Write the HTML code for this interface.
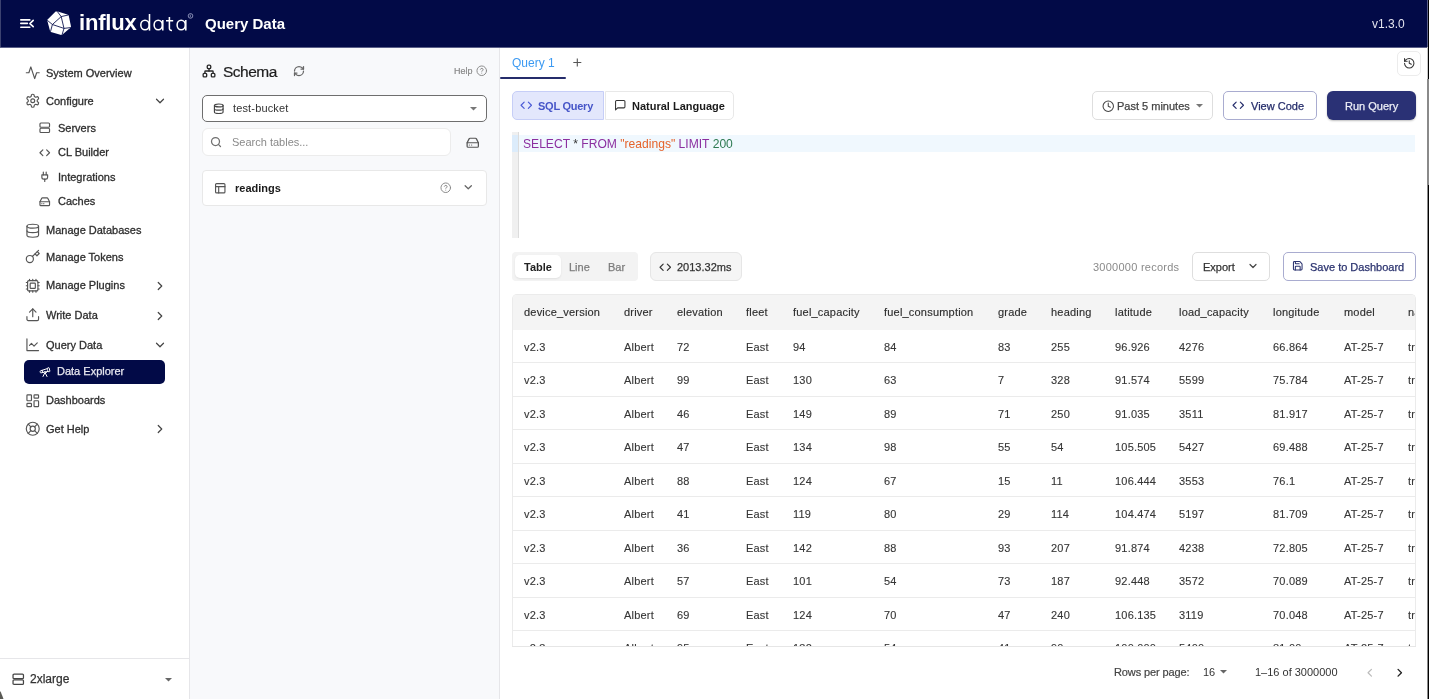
<!DOCTYPE html>
<html><head><meta charset="utf-8">
<style>
*{box-sizing:border-box;margin:0;padding:0}
html,body{width:1429px;height:699px;overflow:hidden;background:#fff;font-family:"Liberation Sans",sans-serif}
.t{position:absolute;line-height:1;white-space:nowrap;will-change:transform}
.b{position:absolute}
.i{position:absolute;overflow:visible}
</style></head><body>
<div class="b" style="left:0px;top:0px;width:1429px;height:47px;background:#020a47"></div><div class="b" style="left:0px;top:47px;width:1429px;height:1px;background:#5a5f88"></div><div class="b" style="left:0px;top:0px;width:1px;height:47px;background:#3c4270"></div><svg class="i" style="left:16px;top:14px" width="24" height="20" viewBox="0 0 24 20"><g stroke="#fff" stroke-width="1.6" fill="none" stroke-linecap="round" stroke-linejoin="round"><path d="M4.8 5.9H13.8M4.8 9.4H11.4M4.8 13.2H13.8"/><path d="M17.2 6.4L13.9 9.6L17.2 12.6"/></g></svg><svg class="i" style="left:44px;top:8px" width="32" height="30" viewBox="0 0 32 30"><path d="M3.6 11.4L11.6 3.4L13.7 3.6L23.4 6.4L24.7 7.5L27 18.5L25.8 20.2L18.5 26.4L17.2 27L6.9 24L6 22.7L3.4 12.9Z" fill="#fff"/><g stroke="#020a47" stroke-width="0.85" fill="none"><path d="M13.2 3.3L17.2 8.6L24.2 7M17.2 8.6L8.4 16.5L3.3 12.3M8.4 16.5L20 20.4L26.5 19.6M17.2 8.6L20 20.4L18 26.9M8.4 16.5L6.5 23.6"/></g></svg><div class="t" style="left:79.30px;top:12.18px;font-size:22px;color:#fff"><b style="letter-spacing:-0.2px">influx</b></div><svg class="i" style="left:136px;top:10px" width="60" height="24" viewBox="0 0 60 24"><g fill="none" stroke="#fff" stroke-width="1.55"><ellipse cx="9" cy="15" rx="4.2" ry="4.8"/><path d="M13.5 4V20.6"/><ellipse cx="22.2" cy="15" rx="4.1" ry="4.8"/><path d="M26.8 10V20.6"/><path d="M33.4 6.9V18.2Q33.4 20.6 36 20.4M30 10.7H37.2"/><ellipse cx="45.2" cy="15" rx="4.1" ry="4.8"/><path d="M49.8 10V20.6"/></g><circle cx="54.5" cy="5.9" r="2.3" fill="none" stroke="#aab0d0" stroke-width="0.8"/><path d="M54.3 4.6V7.2" stroke="#aab0d0" stroke-width="0.7"/></svg><div class="t" style="left:205.00px;top:16.20px;font-size:15px;color:#fff;font-weight:bold">Query Data</div><div class="t" style="left:1371.50px;top:17.84px;font-size:12px;color:#e4e4ee">v1.3.0</div><div class="b" style="left:189px;top:48px;width:1px;height:651px;background:#e6e6e9"></div><svg class="i" style="left:25.05px;top:64.85px" width="15.5" height="15.5" viewBox="0 0 24 24" fill="none" stroke="#555" stroke-width="1.8" stroke-linecap="round" stroke-linejoin="round"><path d="M22 12h-4l-3 9L9 3l-3 9H2"/></svg><div class="t" style="left:46.30px;top:67.69px;font-size:11px;color:#2e2e2e;-webkit-text-stroke:0.3px #2e2e2e">System Overview</div><svg class="i" style="left:24.95px;top:93.05px" width="15.5" height="15.5" viewBox="0 0 24 24" fill="none" stroke="#555" stroke-width="1.8" stroke-linecap="round" stroke-linejoin="round"><path d="M12.22 2h-.44a2 2 0 0 0-2 2v.18a2 2 0 0 1-1 1.730l-.43.25a2 2 0 0 1-2 0l-.15-.08a2 2 0 0 0-2.73.73l-.22.38a2 2 0 0 0 .73 2.73l.15.1a2 2 0 0 1 1 1.72v.51a2 2 0 0 1-1 1.74l-.15.09a2 2 0 0 0-.73 2.73l.22.38a2 2 0 0 0 2.73.73l.15-.08a2 2 0 0 1 2 0l.43.25a2 2 0 0 1 1 1.73V20a2 2 0 0 0 2 2h.44a2 2 0 0 0 2-2v-.18a2 2 0 0 1 1-1.73l.43-.25a2 2 0 0 1 2 0l.15.08a2 2 0 0 0 2.73-.73l.22-.39a2 2 0 0 0-.73-2.730l-.15-.08a2 2 0 0 1-1-1.74v-.5a2 2 0 0 1 1-1.74l.15-.09a2 2 0 0 0 .73-2.73l-.22-.38a2 2 0 0 0-2.73-.73l-.15.08a2 2 0 0 1-2 0l-.43-.25a2 2 0 0 1-1-1.73V4a2 2 0 0 0-2-2z"/><circle cx="12" cy="12" r="3"/></svg><div class="t" style="left:46.30px;top:95.99px;font-size:11px;color:#2e2e2e;-webkit-text-stroke:0.3px #2e2e2e">Configure</div><svg class="i" style="left:38.75px;top:122.25px" width="11.5" height="11.5" viewBox="0 0 24 24" fill="none" stroke="#555" stroke-width="2.4260869565217393" stroke-linecap="round" stroke-linejoin="round"><rect width="20" height="9" x="2" y="2" rx="2"/><rect width="20" height="9" x="2" y="13" rx="2"/></svg><div class="t" style="left:58.30px;top:122.89px;font-size:11px;color:#2e2e2e;-webkit-text-stroke:0.3px #2e2e2e">Servers</div><svg class="i" style="left:38.85px;top:147.35px" width="11.5" height="11.5" viewBox="0 0 24 24" fill="none" stroke="#555" stroke-width="2.4260869565217393" stroke-linecap="round" stroke-linejoin="round"><polyline points="16 18 22 12 16 6"/><polyline points="8 6 2 12 8 18"/></svg><div class="t" style="left:58.30px;top:147.49px;font-size:11px;color:#2e2e2e;-webkit-text-stroke:0.3px #2e2e2e">CL Builder</div><svg class="i" style="left:38.95px;top:171.45px" width="11.5" height="11.5" viewBox="0 0 24 24" fill="none" stroke="#555" stroke-width="2.4260869565217393" stroke-linecap="round" stroke-linejoin="round"><path d="M12 22v-5"/><path d="M9 8V2"/><path d="M15 8V2"/><path d="M18 8v5a4 4 0 0 1-4 4h-4a4 4 0 0 1-4-4V8Z"/></svg><div class="t" style="left:58.30px;top:171.79px;font-size:11px;color:#2e2e2e;-webkit-text-stroke:0.3px #2e2e2e">Integrations</div><svg class="i" style="left:38.75px;top:195.75px" width="11.5" height="11.5" viewBox="0 0 24 24" fill="none" stroke="#555" stroke-width="2.4260869565217393" stroke-linecap="round" stroke-linejoin="round"><line x1="22" x2="2" y1="12" y2="12"/><path d="M5.45 5.11 2 12v6a2 2 0 0 0 2 2h16a2 2 0 0 0 2-2v-6l-3.45-6.89A2 2 0 0 0 16.76 4H7.24a2 2 0 0 0-1.790 1.11z"/><line x1="6" x2="6.01" y1="16" y2="16"/><line x1="10" x2="10.01" y1="16" y2="16"/></svg><div class="t" style="left:58.30px;top:196.49px;font-size:11px;color:#2e2e2e;-webkit-text-stroke:0.3px #2e2e2e">Caches</div><svg class="i" style="left:24.75px;top:222.55px" width="15.5" height="15.5" viewBox="0 0 24 24" fill="none" stroke="#555" stroke-width="1.8" stroke-linecap="round" stroke-linejoin="round"><ellipse cx="12" cy="5" rx="9" ry="3"/><path d="M3 5V19A9 3 0 0 0 21 19V5"/><path d="M3 12A9 3 0 0 0 21 12"/></svg><div class="t" style="left:46.30px;top:225.09px;font-size:11px;color:#2e2e2e;-webkit-text-stroke:0.3px #2e2e2e">Manage Databases</div><svg class="i" style="left:25.05px;top:249.05px" width="15.5" height="15.5" viewBox="0 0 24 24" fill="none" stroke="#555" stroke-width="1.8" stroke-linecap="round" stroke-linejoin="round"><circle cx="7.5" cy="15.5" r="5.5"/><path d="m21 2-9.6 9.6"/><path d="m15.5 7.5 3 3L22 7l-3-3"/></svg><div class="t" style="left:46.30px;top:251.69px;font-size:11px;color:#2e2e2e;-webkit-text-stroke:0.3px #2e2e2e">Manage Tokens</div><svg class="i" style="left:25.05px;top:277.75px" width="15.5" height="15.5" viewBox="0 0 24 24" fill="none" stroke="#555" stroke-width="1.8" stroke-linecap="round" stroke-linejoin="round"><rect width="16" height="16" x="4" y="4" rx="2"/><rect width="8" height="8" x="8" y="8" rx="1"/><path d="M12 20v2M12 2v2M17 20v2M17 2v2M2 12h2M2 17h2M2 7h2M20 12h2M20 17h2M20 7h2M7 20v2M7 2v2"/></svg><div class="t" style="left:46.30px;top:280.19px;font-size:11px;color:#2e2e2e;-webkit-text-stroke:0.3px #2e2e2e">Manage Plugins</div><svg class="i" style="left:24.75px;top:307.25px" width="15.5" height="15.5" viewBox="0 0 24 24" fill="none" stroke="#555" stroke-width="1.8" stroke-linecap="round" stroke-linejoin="round"><path d="M21 15v4a2 2 0 0 1-2 2H5a2 2 0 0 1-2-2v-4"/><polyline points="17 8 12 3 7 8"/><line x1="12" x2="12" y1="3" y2="15"/></svg><div class="t" style="left:46.30px;top:309.89px;font-size:11px;color:#2e2e2e;-webkit-text-stroke:0.3px #2e2e2e">Write Data</div><svg class="i" style="left:24.75px;top:336.75px" width="15.5" height="15.5" viewBox="0 0 24 24" fill="none" stroke="#555" stroke-width="1.8" stroke-linecap="round" stroke-linejoin="round"><path d="M3 3v18h18"/><path d="m19 9-5 5-4-4-3 3"/></svg><div class="t" style="left:46.30px;top:339.59px;font-size:11px;color:#2e2e2e;-webkit-text-stroke:0.3px #2e2e2e">Query Data</div><svg class="i" style="left:25.05px;top:392.65px" width="15.5" height="15.5" viewBox="0 0 24 24" fill="none" stroke="#555" stroke-width="1.8" stroke-linecap="round" stroke-linejoin="round"><rect width="7" height="9" x="3" y="3" rx="1"/><rect width="7" height="5" x="14" y="3" rx="1"/><rect width="7" height="9" x="14" y="12" rx="1"/><rect width="7" height="5" x="3" y="16" rx="1"/></svg><div class="t" style="left:46.30px;top:395.19px;font-size:11px;color:#2e2e2e;-webkit-text-stroke:0.3px #2e2e2e">Dashboards</div><svg class="i" style="left:25.15px;top:420.55px" width="15.5" height="15.5" viewBox="0 0 24 24" fill="none" stroke="#555" stroke-width="1.8" stroke-linecap="round" stroke-linejoin="round"><circle cx="12" cy="12" r="10"/><path d="m4.93 4.93 4.24 4.24"/><path d="m14.83 9.17 4.24-4.24"/><path d="m14.83 14.83 4.24 4.24"/><path d="m9.17 14.83-4.24 4.24"/><circle cx="12" cy="12" r="4"/></svg><div class="t" style="left:46.30px;top:423.59px;font-size:11px;color:#2e2e2e;-webkit-text-stroke:0.3px #2e2e2e">Get Help</div><div class="b" style="left:24px;top:359.5px;width:141px;height:24.0px;background:#020a47;border-radius:5px"></div><svg class="i" style="left:38.90px;top:366.30px" width="12" height="12" viewBox="0 0 24 24" fill="none" stroke="#fff" stroke-width="2.0" stroke-linecap="round" stroke-linejoin="round"><path d="m10.065 12.493-6.18 1.318a.934.934 0 0 1-1.108-.702l-.537-2.15a1.07 1.07 0 0 1 .691-1.265l13.504-4.44"/><path d="m13.56 11.747 4.332-.924"/><path d="m16 21-3.105-6.21"/><path d="M16.485 5.94a2 2 0 0 1 1.455-2.425l1.09-.272a1 1 0 0 1 1.212.727l1.515 6.06a1 1 0 0 1-.727 1.213l-1.09.272a2 2 0 0 1-2.425-1.455z"/><path d="m6.158 8.633 1.114 4.456"/><path d="m8 21 3.105-6.21"/><circle cx="12" cy="13" r="2"/></svg><div class="t" style="left:57.40px;top:366.49px;font-size:11px;color:#e8e8f0;-webkit-text-stroke:0.25px #e8e8f0">Data Explorer</div><svg class="i" style="left:153.30px;top:94.30px" width="14" height="14" viewBox="0 0 24 24" fill="none" stroke="#444" stroke-width="2.1" stroke-linecap="round" stroke-linejoin="round"><path d="m6 9 6 6 6-6"/></svg><svg class="i" style="left:153.30px;top:279.00px" width="14" height="14" viewBox="0 0 24 24" fill="none" stroke="#444" stroke-width="2.1" stroke-linecap="round" stroke-linejoin="round"><path d="m9 18 6-6-6-6"/></svg><svg class="i" style="left:153.30px;top:309.20px" width="14" height="14" viewBox="0 0 24 24" fill="none" stroke="#444" stroke-width="2.1" stroke-linecap="round" stroke-linejoin="round"><path d="m9 18 6-6-6-6"/></svg><svg class="i" style="left:153.30px;top:338.10px" width="14" height="14" viewBox="0 0 24 24" fill="none" stroke="#444" stroke-width="2.1" stroke-linecap="round" stroke-linejoin="round"><path d="m6 9 6 6 6-6"/></svg><svg class="i" style="left:153.30px;top:422.00px" width="14" height="14" viewBox="0 0 24 24" fill="none" stroke="#444" stroke-width="2.1" stroke-linecap="round" stroke-linejoin="round"><path d="m9 18 6-6-6-6"/></svg><div class="b" style="left:0px;top:658px;width:189px;height:1px;background:#e6e6e9"></div><svg class="i" style="left:11.65px;top:673.05px" width="12.5" height="12.5" viewBox="0 0 24 24" fill="none" stroke="#444" stroke-width="2.4" stroke-linecap="round" stroke-linejoin="round"><rect width="20" height="9" x="2" y="2" rx="2"/><rect width="20" height="9" x="2" y="13" rx="2"/></svg><div class="t" style="left:29.80px;top:673.34px;font-size:12px;color:#333;-webkit-text-stroke:0.25px #333">2xlarge</div><svg class="i" style="left:0;top:690px" width="5" height="9" viewBox="0 0 5 9"><path d="M0 1L1 2.5L3.5 9H0Z" fill="#5a5a55"/></svg><svg class="i" style="left:164.70px;top:677.85px" width="7" height="3.5" viewBox="0 0 7 3.5"><path d="M0 0H7L3.5 3.5Z" fill="#666"/></svg><div class="b" style="left:190px;top:48px;width:309px;height:651px;background:#f8f9fb"></div><div class="b" style="left:499px;top:48px;width:1px;height:651px;background:#e6e6e9"></div><svg class="i" style="left:202.00px;top:64.10px" width="14" height="14" viewBox="0 0 24 24" fill="none" stroke="#2a2a2a" stroke-width="2.3" stroke-linecap="round" stroke-linejoin="round"><rect x="16" y="16" width="6" height="6" rx="1.5"/><rect x="2" y="16" width="6" height="6" rx="1.5"/><rect x="9" y="2" width="6" height="6" rx="2"/><path d="M5 16v-3a1 1 0 0 1 1-1h12a1 1 0 0 1 1 1v3"/><path d="M12 12V8"/></svg><div class="t" style="left:222.50px;top:63.88px;font-size:15.5px;color:#1c1c1c;letter-spacing:-0.5px;-webkit-text-stroke:0.2px #1c1c1c">Schema</div><svg class="i" style="left:293.00px;top:65.00px" width="12" height="12" viewBox="0 0 24 24" fill="none" stroke="#666" stroke-width="2.5" stroke-linecap="round" stroke-linejoin="round"><path d="M3 12a9 9 0 0 1 9-9 9.75 9.75 0 0 1 6.74 2.74L21 8"/><path d="M21 3v5h-5"/><path d="M21 12a9 9 0 0 1-9 9 9.75 9.75 0 0 1-6.74-2.74L3 16"/><path d="M8 16H3v5"/></svg><div class="t" style="left:453.50px;top:66.58px;font-size:9px;color:#888;-webkit-text-stroke:0.2px #888">Help</div><svg class="i" style="left:476.15px;top:65.25px" width="11.5" height="11.5" viewBox="0 0 24 24" fill="none" stroke="#888" stroke-width="2.0" stroke-linecap="round" stroke-linejoin="round"><circle cx="12" cy="12" r="10"/><path d="M9.09 9a3 3 0 0 1 5.83 1c0 2-3 3-3 3"/><path d="M12 17h.01"/></svg><div class="b" style="left:201.5px;top:95px;width:285.5px;height:26.5px;background:#fff;border:1.3px solid #6e6e6e;border-radius:5px"></div><svg class="i" style="left:212.65px;top:102.85px" width="11.5" height="11.5" viewBox="0 0 24 24" fill="none" stroke="#444" stroke-width="2.4" stroke-linecap="round" stroke-linejoin="round"><ellipse cx="12" cy="5" rx="9" ry="3"/><path d="M3 5V19A9 3 0 0 0 21 19V5"/><path d="M3 12A9 3 0 0 0 21 12"/></svg><div class="t" style="left:232.50px;top:102.89px;font-size:11px;color:#333;letter-spacing:0.15px">test-bucket</div><svg class="i" style="left:469.50px;top:106.55px" width="7" height="3.5" viewBox="0 0 7 3.5"><path d="M0 0H7L3.5 3.5Z" fill="#777"/></svg><div class="b" style="left:202px;top:127.5px;width:249px;height:28.0px;background:#fff;border:1px solid #ececec;border-radius:6px"></div><svg class="i" style="left:210.30px;top:135.80px" width="12" height="12" viewBox="0 0 24 24" fill="none" stroke="#707070" stroke-width="2.5" stroke-linecap="round" stroke-linejoin="round"><circle cx="11" cy="11" r="8"/><path d="m21 21-4.3-4.3"/></svg><div class="t" style="left:232.00px;top:137.29px;font-size:11px;color:#8a8a8a">Search tables...</div><svg class="i" style="left:465.65px;top:135.75px" width="13.5" height="13.5" viewBox="0 0 24 24" fill="none" stroke="#555" stroke-width="2.2" stroke-linecap="round" stroke-linejoin="round"><line x1="22" x2="2" y1="12" y2="12"/><path d="M5.45 5.11 2 12v6a2 2 0 0 0 2 2h16a2 2 0 0 0 2-2v-6l-3.45-6.89A2 2 0 0 0 16.76 4H7.24a2 2 0 0 0-1.790 1.11z"/><line x1="6" x2="6.01" y1="16" y2="16"/><line x1="10" x2="10.01" y1="16" y2="16"/></svg><div class="b" style="left:201.5px;top:169.5px;width:285.0px;height:36.5px;background:#fff;border:1px solid #e8e8e8;border-radius:4px"></div><svg class="i" style="left:213.85px;top:181.65px" width="12.5" height="12.5" viewBox="0 0 24 24" fill="none" stroke="#555" stroke-width="2.2" stroke-linecap="round" stroke-linejoin="round"><rect width="18" height="18" x="3" y="3" rx="2"/><path d="M3 9h18"/><path d="M9 21V9"/></svg><div class="t" style="left:235.30px;top:182.99px;font-size:11px;color:#1a1a1a;font-weight:bold">readings</div><svg class="i" style="left:440.05px;top:182.35px" width="11.5" height="11.5" viewBox="0 0 24 24" fill="none" stroke="#888" stroke-width="2.0" stroke-linecap="round" stroke-linejoin="round"><circle cx="12" cy="12" r="10"/><path d="M9.09 9a3 3 0 0 1 5.83 1c0 2-3 3-3 3"/><path d="M12 17h.01"/></svg><svg class="i" style="left:462.25px;top:181.45px" width="12.5" height="12.5" viewBox="0 0 24 24" fill="none" stroke="#666" stroke-width="2.4" stroke-linecap="round" stroke-linejoin="round"><path d="m6 9 6 6 6-6"/></svg><div class="t" style="left:511.50px;top:57.44px;font-size:12px;color:#3c9af2">Query 1</div><div class="b" style="left:500px;top:77px;width:65.5px;height:2px;background:#252c6b;border-radius:1px"></div><svg class="i" style="left:572px;top:57px" width="11" height="11" viewBox="0 0 11 11"><path d="M5.3 1.5V9.5M1.3 5.5H9.3" stroke="#555" stroke-width="1.1"/></svg><div class="b" style="left:1396.5px;top:50.5px;width:24.0px;height:25.0px;background:#fff;border:1px solid #ececec;border-radius:5px"></div><svg class="i" style="left:1402.65px;top:56.75px" width="12.5" height="12.5" viewBox="0 0 24 24" fill="none" stroke="#333" stroke-width="2" stroke-linecap="round" stroke-linejoin="round"><path d="M3 12a9 9 0 1 0 9-9 9.75 9.75 0 0 0-6.74 2.74L3 8"/><path d="M3 3v5h5"/><path d="M12 7v5l4 2"/></svg><div class="b" style="left:511.5px;top:90.5px;width:92.0px;height:29.5px;background:#e3e7fc;border:1px solid #c6cef7;border-radius:5px 0 0 5px"></div><svg class="i" style="left:520.25px;top:99.35px" width="12.5" height="12.5" viewBox="0 0 24 24" fill="none" stroke="#4a5ad6" stroke-width="2.2" stroke-linecap="round" stroke-linejoin="round"><polyline points="16 18 22 12 16 6"/><polyline points="8 6 2 12 8 18"/></svg><div class="t" style="left:538.00px;top:100.59px;font-size:11px;color:#4655c8;font-weight:bold;letter-spacing:-0.25px">SQL Query</div><div class="b" style="left:605px;top:90.5px;width:128.5px;height:29.5px;background:#fff;border:1px solid #e8e8e8;border-radius:0 5px 5px 0"></div><svg class="i" style="left:614.25px;top:99.15px" width="12.5" height="12.5" viewBox="0 0 24 24" fill="none" stroke="#333" stroke-width="2" stroke-linecap="round" stroke-linejoin="round"><path d="M21 15a2 2 0 0 1-2 2H7l-4 4V5a2 2 0 0 1 2-2h14a2 2 0 0 1 2 2z"/></svg><div class="t" style="left:632.00px;top:100.59px;font-size:11px;color:#1a1a1a;font-weight:bold">Natural Language</div><div class="b" style="left:1091.5px;top:90.5px;width:121.5px;height:29.5px;background:#fff;border:1px solid #dedede;border-radius:5px"></div><svg class="i" style="left:1101.85px;top:99.85px" width="12.5" height="12.5" viewBox="0 0 24 24" fill="none" stroke="#444" stroke-width="2" stroke-linecap="round" stroke-linejoin="round"><circle cx="12" cy="12" r="10"/><polyline points="12 6 12 12 16 14"/></svg><div class="t" style="left:1117.20px;top:100.59px;font-size:11px;color:#444;-webkit-text-stroke:0.25px currentColor">Past 5 minutes</div><svg class="i" style="left:1195.70px;top:103.55px" width="7" height="3.5" viewBox="0 0 7 3.5"><path d="M0 0H7L3.5 3.5Z" fill="#777"/></svg><div class="b" style="left:1222.5px;top:90.5px;width:94.5px;height:29.5px;background:#fff;border:1px solid #a9acd0;border-radius:5px"></div><svg class="i" style="left:1231.95px;top:98.95px" width="12.5" height="12.5" viewBox="0 0 24 24" fill="none" stroke="#252d6b" stroke-width="2.2" stroke-linecap="round" stroke-linejoin="round"><polyline points="16 18 22 12 16 6"/><polyline points="8 6 2 12 8 18"/></svg><div class="t" style="left:1250.80px;top:100.59px;font-size:11px;color:#252d6b;-webkit-text-stroke:0.25px currentColor">View Code</div><div class="b" style="left:1326.5px;top:90.5px;width:89.0px;height:29.5px;background:#2a3175;border-radius:6px;box-shadow:0 1px 2px rgba(0,0,0,.25)"></div><div class="t" style="left:1344.50px;top:101.19px;font-size:11px;color:#eceef6;-webkit-text-stroke:0.25px currentColor">Run Query</div><div class="b" style="left:512px;top:132px;width:7px;height:106px;background:#f0f0f0;border-right:1px solid #dcdcdc"></div><div class="b" style="left:512px;top:135px;width:6px;height:16.5px;background:#dcecfb"></div><div class="b" style="left:519px;top:135px;width:896px;height:16.5px;background:#f0f8fe"></div><div class="t" style="left:523.00px;top:137.76px;font-size:12.1px;color:#8b2fa0">SELECT <span style="color:#333">*</span> FROM <span style="color:#e5632b">"readings"</span> LIMIT <span style="color:#2d7a52">200</span></div><div class="b" style="left:511.5px;top:251.5px;width:126.0px;height:29.5px;background:#f3f3f3;border-radius:4px"></div><div class="b" style="left:514.5px;top:254.5px;width:46.0px;height:23.5px;background:#fff;border-radius:5px;box-shadow:0 1px 2px rgba(0,0,0,.08)"></div><div class="t" style="left:524.30px;top:261.79px;font-size:11px;color:#222;font-weight:bold">Table</div><div class="t" style="left:568.80px;top:261.79px;font-size:11px;color:#7c7c7c;-webkit-text-stroke:0.25px currentColor">Line</div><div class="t" style="left:607.80px;top:261.79px;font-size:11px;color:#7c7c7c;-webkit-text-stroke:0.25px currentColor">Bar</div><div class="b" style="left:649.5px;top:251.5px;width:92.0px;height:29.5px;background:#f5f5f5;border:1px solid #e6e6e6;border-radius:6px"></div><svg class="i" style="left:658.75px;top:260.75px" width="12.5" height="12.5" viewBox="0 0 24 24" fill="none" stroke="#333" stroke-width="2.2" stroke-linecap="round" stroke-linejoin="round"><polyline points="16 18 22 12 16 6"/><polyline points="8 6 2 12 8 18"/></svg><div class="t" style="left:677.20px;top:261.79px;font-size:11px;color:#333;-webkit-text-stroke:0.25px currentColor">2013.32ms</div><div class="t" style="left:1092.80px;top:261.89px;font-size:11px;color:#8a8a8a;letter-spacing:0.25px">3000000 records</div><div class="b" style="left:1191.5px;top:251.5px;width:78.5px;height:29.5px;background:#fff;border:1px solid #dedede;border-radius:5px"></div><div class="t" style="left:1202.70px;top:261.89px;font-size:11px;color:#333;-webkit-text-stroke:0.25px currentColor">Export</div><svg class="i" style="left:1246.80px;top:260.40px" width="12" height="12" viewBox="0 0 24 24" fill="none" stroke="#444" stroke-width="2.4" stroke-linecap="round" stroke-linejoin="round"><path d="m6 9 6 6 6-6"/></svg><div class="b" style="left:1282.5px;top:251.5px;width:133.0px;height:29.5px;background:#fff;border:1px solid #a9acd0;border-radius:5px"></div><svg class="i" style="left:1292.25px;top:260.45px" width="11.5" height="11.5" viewBox="0 0 24 24" fill="none" stroke="#2b336f" stroke-width="2.2" stroke-linecap="round" stroke-linejoin="round"><path d="M15.2 3a2 2 0 0 1 1.4.6l3.8 3.8a2 2 0 0 1 .6 1.4V19a2 2 0 0 1-2 2H5a2 2 0 0 1-2-2V5a2 2 0 0 1 2-2z"/><path d="M17 21v-7a1 1 0 0 0-1-1H8a1 1 0 0 0-1 1v7"/><path d="M7 3v4a1 1 0 0 0 1 1h7"/></svg><div class="t" style="left:1310.10px;top:261.89px;font-size:11px;color:#2b336f;-webkit-text-stroke:0.25px currentColor">Save to Dashboard</div><div class="b" style="left:512px;top:293.5px;width:903.5px;height:353px;border:1px solid #ebebeb;border-bottom:none;border-radius:5px 5px 0 0;overflow:hidden;background:#fff"><div style="position:relative;left:-1px;top:-1px"><div class="b" style="left:0px;top:0px;width:904px;height:36px;background:#f4f4f4"></div><div class="t" style="left:12.20px;top:13.49px;font-size:11px;color:#2e2e2e;letter-spacing:0.2px;-webkit-text-stroke:0.15px #2e2e2e">device_version</div><div class="t" style="left:111.70px;top:13.49px;font-size:11px;color:#2e2e2e;letter-spacing:0.2px;-webkit-text-stroke:0.15px #2e2e2e">driver</div><div class="t" style="left:165.20px;top:13.49px;font-size:11px;color:#2e2e2e;letter-spacing:0.2px;-webkit-text-stroke:0.15px #2e2e2e">elevation</div><div class="t" style="left:234.20px;top:13.49px;font-size:11px;color:#2e2e2e;letter-spacing:0.2px;-webkit-text-stroke:0.15px #2e2e2e">fleet</div><div class="t" style="left:281.20px;top:13.49px;font-size:11px;color:#2e2e2e;letter-spacing:0.2px;-webkit-text-stroke:0.15px #2e2e2e">fuel_capacity</div><div class="t" style="left:372.20px;top:13.49px;font-size:11px;color:#2e2e2e;letter-spacing:0.2px;-webkit-text-stroke:0.15px #2e2e2e">fuel_consumption</div><div class="t" style="left:485.70px;top:13.49px;font-size:11px;color:#2e2e2e;letter-spacing:0.2px;-webkit-text-stroke:0.15px #2e2e2e">grade</div><div class="t" style="left:538.70px;top:13.49px;font-size:11px;color:#2e2e2e;letter-spacing:0.2px;-webkit-text-stroke:0.15px #2e2e2e">heading</div><div class="t" style="left:602.70px;top:13.49px;font-size:11px;color:#2e2e2e;letter-spacing:0.2px;-webkit-text-stroke:0.15px #2e2e2e">latitude</div><div class="t" style="left:667.20px;top:13.49px;font-size:11px;color:#2e2e2e;letter-spacing:0.2px;-webkit-text-stroke:0.15px #2e2e2e">load_capacity</div><div class="t" style="left:761.20px;top:13.49px;font-size:11px;color:#2e2e2e;letter-spacing:0.2px;-webkit-text-stroke:0.15px #2e2e2e">longitude</div><div class="t" style="left:831.70px;top:13.49px;font-size:11px;color:#2e2e2e;letter-spacing:0.2px;-webkit-text-stroke:0.15px #2e2e2e">model</div><div class="t" style="left:896.20px;top:13.49px;font-size:11px;color:#2e2e2e;letter-spacing:0.2px;-webkit-text-stroke:0.15px #2e2e2e">name</div><div class="b" style="left:0px;top:68.8px;width:904px;height:1.0px;background:#ebebeb"></div><div class="t" style="left:12.20px;top:48.09px;font-size:11px;color:#363636;letter-spacing:0.2px;-webkit-text-stroke:0.12px #363636">v2.3</div><div class="t" style="left:111.70px;top:48.09px;font-size:11px;color:#363636;letter-spacing:0.2px;-webkit-text-stroke:0.12px #363636">Albert</div><div class="t" style="left:165.20px;top:48.09px;font-size:11px;color:#363636;letter-spacing:0.2px;-webkit-text-stroke:0.12px #363636">72</div><div class="t" style="left:234.20px;top:48.09px;font-size:11px;color:#363636;letter-spacing:0.2px;-webkit-text-stroke:0.12px #363636">East</div><div class="t" style="left:281.20px;top:48.09px;font-size:11px;color:#363636;letter-spacing:0.2px;-webkit-text-stroke:0.12px #363636">94</div><div class="t" style="left:372.20px;top:48.09px;font-size:11px;color:#363636;letter-spacing:0.2px;-webkit-text-stroke:0.12px #363636">84</div><div class="t" style="left:485.70px;top:48.09px;font-size:11px;color:#363636;letter-spacing:0.2px;-webkit-text-stroke:0.12px #363636">83</div><div class="t" style="left:538.70px;top:48.09px;font-size:11px;color:#363636;letter-spacing:0.2px;-webkit-text-stroke:0.12px #363636">255</div><div class="t" style="left:602.70px;top:48.09px;font-size:11px;color:#363636;letter-spacing:0.2px;-webkit-text-stroke:0.12px #363636">96.926</div><div class="t" style="left:667.20px;top:48.09px;font-size:11px;color:#363636;letter-spacing:0.2px;-webkit-text-stroke:0.12px #363636">4276</div><div class="t" style="left:761.20px;top:48.09px;font-size:11px;color:#363636;letter-spacing:0.2px;-webkit-text-stroke:0.12px #363636">66.864</div><div class="t" style="left:831.70px;top:48.09px;font-size:11px;color:#363636;letter-spacing:0.2px;-webkit-text-stroke:0.12px #363636">AT-25-7</div><div class="t" style="left:896.20px;top:48.09px;font-size:11px;color:#363636;letter-spacing:0.2px;-webkit-text-stroke:0.12px #363636">tr</div><div class="b" style="left:0px;top:102.3px;width:904px;height:1.0px;background:#ebebeb"></div><div class="t" style="left:12.20px;top:81.59px;font-size:11px;color:#363636;letter-spacing:0.2px;-webkit-text-stroke:0.12px #363636">v2.3</div><div class="t" style="left:111.70px;top:81.59px;font-size:11px;color:#363636;letter-spacing:0.2px;-webkit-text-stroke:0.12px #363636">Albert</div><div class="t" style="left:165.20px;top:81.59px;font-size:11px;color:#363636;letter-spacing:0.2px;-webkit-text-stroke:0.12px #363636">99</div><div class="t" style="left:234.20px;top:81.59px;font-size:11px;color:#363636;letter-spacing:0.2px;-webkit-text-stroke:0.12px #363636">East</div><div class="t" style="left:281.20px;top:81.59px;font-size:11px;color:#363636;letter-spacing:0.2px;-webkit-text-stroke:0.12px #363636">130</div><div class="t" style="left:372.20px;top:81.59px;font-size:11px;color:#363636;letter-spacing:0.2px;-webkit-text-stroke:0.12px #363636">63</div><div class="t" style="left:485.70px;top:81.59px;font-size:11px;color:#363636;letter-spacing:0.2px;-webkit-text-stroke:0.12px #363636">7</div><div class="t" style="left:538.70px;top:81.59px;font-size:11px;color:#363636;letter-spacing:0.2px;-webkit-text-stroke:0.12px #363636">328</div><div class="t" style="left:602.70px;top:81.59px;font-size:11px;color:#363636;letter-spacing:0.2px;-webkit-text-stroke:0.12px #363636">91.574</div><div class="t" style="left:667.20px;top:81.59px;font-size:11px;color:#363636;letter-spacing:0.2px;-webkit-text-stroke:0.12px #363636">5599</div><div class="t" style="left:761.20px;top:81.59px;font-size:11px;color:#363636;letter-spacing:0.2px;-webkit-text-stroke:0.12px #363636">75.784</div><div class="t" style="left:831.70px;top:81.59px;font-size:11px;color:#363636;letter-spacing:0.2px;-webkit-text-stroke:0.12px #363636">AT-25-7</div><div class="t" style="left:896.20px;top:81.59px;font-size:11px;color:#363636;letter-spacing:0.2px;-webkit-text-stroke:0.12px #363636">tr</div><div class="b" style="left:0px;top:135.8px;width:904px;height:1.0px;background:#ebebeb"></div><div class="t" style="left:12.20px;top:115.09px;font-size:11px;color:#363636;letter-spacing:0.2px;-webkit-text-stroke:0.12px #363636">v2.3</div><div class="t" style="left:111.70px;top:115.09px;font-size:11px;color:#363636;letter-spacing:0.2px;-webkit-text-stroke:0.12px #363636">Albert</div><div class="t" style="left:165.20px;top:115.09px;font-size:11px;color:#363636;letter-spacing:0.2px;-webkit-text-stroke:0.12px #363636">46</div><div class="t" style="left:234.20px;top:115.09px;font-size:11px;color:#363636;letter-spacing:0.2px;-webkit-text-stroke:0.12px #363636">East</div><div class="t" style="left:281.20px;top:115.09px;font-size:11px;color:#363636;letter-spacing:0.2px;-webkit-text-stroke:0.12px #363636">149</div><div class="t" style="left:372.20px;top:115.09px;font-size:11px;color:#363636;letter-spacing:0.2px;-webkit-text-stroke:0.12px #363636">89</div><div class="t" style="left:485.70px;top:115.09px;font-size:11px;color:#363636;letter-spacing:0.2px;-webkit-text-stroke:0.12px #363636">71</div><div class="t" style="left:538.70px;top:115.09px;font-size:11px;color:#363636;letter-spacing:0.2px;-webkit-text-stroke:0.12px #363636">250</div><div class="t" style="left:602.70px;top:115.09px;font-size:11px;color:#363636;letter-spacing:0.2px;-webkit-text-stroke:0.12px #363636">91.035</div><div class="t" style="left:667.20px;top:115.09px;font-size:11px;color:#363636;letter-spacing:0.2px;-webkit-text-stroke:0.12px #363636">3511</div><div class="t" style="left:761.20px;top:115.09px;font-size:11px;color:#363636;letter-spacing:0.2px;-webkit-text-stroke:0.12px #363636">81.917</div><div class="t" style="left:831.70px;top:115.09px;font-size:11px;color:#363636;letter-spacing:0.2px;-webkit-text-stroke:0.12px #363636">AT-25-7</div><div class="t" style="left:896.20px;top:115.09px;font-size:11px;color:#363636;letter-spacing:0.2px;-webkit-text-stroke:0.12px #363636">tr</div><div class="b" style="left:0px;top:169.3px;width:904px;height:1.0px;background:#ebebeb"></div><div class="t" style="left:12.20px;top:148.59px;font-size:11px;color:#363636;letter-spacing:0.2px;-webkit-text-stroke:0.12px #363636">v2.3</div><div class="t" style="left:111.70px;top:148.59px;font-size:11px;color:#363636;letter-spacing:0.2px;-webkit-text-stroke:0.12px #363636">Albert</div><div class="t" style="left:165.20px;top:148.59px;font-size:11px;color:#363636;letter-spacing:0.2px;-webkit-text-stroke:0.12px #363636">47</div><div class="t" style="left:234.20px;top:148.59px;font-size:11px;color:#363636;letter-spacing:0.2px;-webkit-text-stroke:0.12px #363636">East</div><div class="t" style="left:281.20px;top:148.59px;font-size:11px;color:#363636;letter-spacing:0.2px;-webkit-text-stroke:0.12px #363636">134</div><div class="t" style="left:372.20px;top:148.59px;font-size:11px;color:#363636;letter-spacing:0.2px;-webkit-text-stroke:0.12px #363636">98</div><div class="t" style="left:485.70px;top:148.59px;font-size:11px;color:#363636;letter-spacing:0.2px;-webkit-text-stroke:0.12px #363636">55</div><div class="t" style="left:538.70px;top:148.59px;font-size:11px;color:#363636;letter-spacing:0.2px;-webkit-text-stroke:0.12px #363636">54</div><div class="t" style="left:602.70px;top:148.59px;font-size:11px;color:#363636;letter-spacing:0.2px;-webkit-text-stroke:0.12px #363636">105.505</div><div class="t" style="left:667.20px;top:148.59px;font-size:11px;color:#363636;letter-spacing:0.2px;-webkit-text-stroke:0.12px #363636">5427</div><div class="t" style="left:761.20px;top:148.59px;font-size:11px;color:#363636;letter-spacing:0.2px;-webkit-text-stroke:0.12px #363636">69.488</div><div class="t" style="left:831.70px;top:148.59px;font-size:11px;color:#363636;letter-spacing:0.2px;-webkit-text-stroke:0.12px #363636">AT-25-7</div><div class="t" style="left:896.20px;top:148.59px;font-size:11px;color:#363636;letter-spacing:0.2px;-webkit-text-stroke:0.12px #363636">tr</div><div class="b" style="left:0px;top:202.8px;width:904px;height:1.0px;background:#ebebeb"></div><div class="t" style="left:12.20px;top:182.09px;font-size:11px;color:#363636;letter-spacing:0.2px;-webkit-text-stroke:0.12px #363636">v2.3</div><div class="t" style="left:111.70px;top:182.09px;font-size:11px;color:#363636;letter-spacing:0.2px;-webkit-text-stroke:0.12px #363636">Albert</div><div class="t" style="left:165.20px;top:182.09px;font-size:11px;color:#363636;letter-spacing:0.2px;-webkit-text-stroke:0.12px #363636">88</div><div class="t" style="left:234.20px;top:182.09px;font-size:11px;color:#363636;letter-spacing:0.2px;-webkit-text-stroke:0.12px #363636">East</div><div class="t" style="left:281.20px;top:182.09px;font-size:11px;color:#363636;letter-spacing:0.2px;-webkit-text-stroke:0.12px #363636">124</div><div class="t" style="left:372.20px;top:182.09px;font-size:11px;color:#363636;letter-spacing:0.2px;-webkit-text-stroke:0.12px #363636">67</div><div class="t" style="left:485.70px;top:182.09px;font-size:11px;color:#363636;letter-spacing:0.2px;-webkit-text-stroke:0.12px #363636">15</div><div class="t" style="left:538.70px;top:182.09px;font-size:11px;color:#363636;letter-spacing:0.2px;-webkit-text-stroke:0.12px #363636">11</div><div class="t" style="left:602.70px;top:182.09px;font-size:11px;color:#363636;letter-spacing:0.2px;-webkit-text-stroke:0.12px #363636">106.444</div><div class="t" style="left:667.20px;top:182.09px;font-size:11px;color:#363636;letter-spacing:0.2px;-webkit-text-stroke:0.12px #363636">3553</div><div class="t" style="left:761.20px;top:182.09px;font-size:11px;color:#363636;letter-spacing:0.2px;-webkit-text-stroke:0.12px #363636">76.1</div><div class="t" style="left:831.70px;top:182.09px;font-size:11px;color:#363636;letter-spacing:0.2px;-webkit-text-stroke:0.12px #363636">AT-25-7</div><div class="t" style="left:896.20px;top:182.09px;font-size:11px;color:#363636;letter-spacing:0.2px;-webkit-text-stroke:0.12px #363636">tr</div><div class="b" style="left:0px;top:236.3px;width:904px;height:1.0px;background:#ebebeb"></div><div class="t" style="left:12.20px;top:215.59px;font-size:11px;color:#363636;letter-spacing:0.2px;-webkit-text-stroke:0.12px #363636">v2.3</div><div class="t" style="left:111.70px;top:215.59px;font-size:11px;color:#363636;letter-spacing:0.2px;-webkit-text-stroke:0.12px #363636">Albert</div><div class="t" style="left:165.20px;top:215.59px;font-size:11px;color:#363636;letter-spacing:0.2px;-webkit-text-stroke:0.12px #363636">41</div><div class="t" style="left:234.20px;top:215.59px;font-size:11px;color:#363636;letter-spacing:0.2px;-webkit-text-stroke:0.12px #363636">East</div><div class="t" style="left:281.20px;top:215.59px;font-size:11px;color:#363636;letter-spacing:0.2px;-webkit-text-stroke:0.12px #363636">119</div><div class="t" style="left:372.20px;top:215.59px;font-size:11px;color:#363636;letter-spacing:0.2px;-webkit-text-stroke:0.12px #363636">80</div><div class="t" style="left:485.70px;top:215.59px;font-size:11px;color:#363636;letter-spacing:0.2px;-webkit-text-stroke:0.12px #363636">29</div><div class="t" style="left:538.70px;top:215.59px;font-size:11px;color:#363636;letter-spacing:0.2px;-webkit-text-stroke:0.12px #363636">114</div><div class="t" style="left:602.70px;top:215.59px;font-size:11px;color:#363636;letter-spacing:0.2px;-webkit-text-stroke:0.12px #363636">104.474</div><div class="t" style="left:667.20px;top:215.59px;font-size:11px;color:#363636;letter-spacing:0.2px;-webkit-text-stroke:0.12px #363636">5197</div><div class="t" style="left:761.20px;top:215.59px;font-size:11px;color:#363636;letter-spacing:0.2px;-webkit-text-stroke:0.12px #363636">81.709</div><div class="t" style="left:831.70px;top:215.59px;font-size:11px;color:#363636;letter-spacing:0.2px;-webkit-text-stroke:0.12px #363636">AT-25-7</div><div class="t" style="left:896.20px;top:215.59px;font-size:11px;color:#363636;letter-spacing:0.2px;-webkit-text-stroke:0.12px #363636">tr</div><div class="b" style="left:0px;top:269.8px;width:904px;height:1.0px;background:#ebebeb"></div><div class="t" style="left:12.20px;top:249.09px;font-size:11px;color:#363636;letter-spacing:0.2px;-webkit-text-stroke:0.12px #363636">v2.3</div><div class="t" style="left:111.70px;top:249.09px;font-size:11px;color:#363636;letter-spacing:0.2px;-webkit-text-stroke:0.12px #363636">Albert</div><div class="t" style="left:165.20px;top:249.09px;font-size:11px;color:#363636;letter-spacing:0.2px;-webkit-text-stroke:0.12px #363636">36</div><div class="t" style="left:234.20px;top:249.09px;font-size:11px;color:#363636;letter-spacing:0.2px;-webkit-text-stroke:0.12px #363636">East</div><div class="t" style="left:281.20px;top:249.09px;font-size:11px;color:#363636;letter-spacing:0.2px;-webkit-text-stroke:0.12px #363636">142</div><div class="t" style="left:372.20px;top:249.09px;font-size:11px;color:#363636;letter-spacing:0.2px;-webkit-text-stroke:0.12px #363636">88</div><div class="t" style="left:485.70px;top:249.09px;font-size:11px;color:#363636;letter-spacing:0.2px;-webkit-text-stroke:0.12px #363636">93</div><div class="t" style="left:538.70px;top:249.09px;font-size:11px;color:#363636;letter-spacing:0.2px;-webkit-text-stroke:0.12px #363636">207</div><div class="t" style="left:602.70px;top:249.09px;font-size:11px;color:#363636;letter-spacing:0.2px;-webkit-text-stroke:0.12px #363636">91.874</div><div class="t" style="left:667.20px;top:249.09px;font-size:11px;color:#363636;letter-spacing:0.2px;-webkit-text-stroke:0.12px #363636">4238</div><div class="t" style="left:761.20px;top:249.09px;font-size:11px;color:#363636;letter-spacing:0.2px;-webkit-text-stroke:0.12px #363636">72.805</div><div class="t" style="left:831.70px;top:249.09px;font-size:11px;color:#363636;letter-spacing:0.2px;-webkit-text-stroke:0.12px #363636">AT-25-7</div><div class="t" style="left:896.20px;top:249.09px;font-size:11px;color:#363636;letter-spacing:0.2px;-webkit-text-stroke:0.12px #363636">tr</div><div class="b" style="left:0px;top:303.3px;width:904px;height:1.0px;background:#ebebeb"></div><div class="t" style="left:12.20px;top:282.59px;font-size:11px;color:#363636;letter-spacing:0.2px;-webkit-text-stroke:0.12px #363636">v2.3</div><div class="t" style="left:111.70px;top:282.59px;font-size:11px;color:#363636;letter-spacing:0.2px;-webkit-text-stroke:0.12px #363636">Albert</div><div class="t" style="left:165.20px;top:282.59px;font-size:11px;color:#363636;letter-spacing:0.2px;-webkit-text-stroke:0.12px #363636">57</div><div class="t" style="left:234.20px;top:282.59px;font-size:11px;color:#363636;letter-spacing:0.2px;-webkit-text-stroke:0.12px #363636">East</div><div class="t" style="left:281.20px;top:282.59px;font-size:11px;color:#363636;letter-spacing:0.2px;-webkit-text-stroke:0.12px #363636">101</div><div class="t" style="left:372.20px;top:282.59px;font-size:11px;color:#363636;letter-spacing:0.2px;-webkit-text-stroke:0.12px #363636">54</div><div class="t" style="left:485.70px;top:282.59px;font-size:11px;color:#363636;letter-spacing:0.2px;-webkit-text-stroke:0.12px #363636">73</div><div class="t" style="left:538.70px;top:282.59px;font-size:11px;color:#363636;letter-spacing:0.2px;-webkit-text-stroke:0.12px #363636">187</div><div class="t" style="left:602.70px;top:282.59px;font-size:11px;color:#363636;letter-spacing:0.2px;-webkit-text-stroke:0.12px #363636">92.448</div><div class="t" style="left:667.20px;top:282.59px;font-size:11px;color:#363636;letter-spacing:0.2px;-webkit-text-stroke:0.12px #363636">3572</div><div class="t" style="left:761.20px;top:282.59px;font-size:11px;color:#363636;letter-spacing:0.2px;-webkit-text-stroke:0.12px #363636">70.089</div><div class="t" style="left:831.70px;top:282.59px;font-size:11px;color:#363636;letter-spacing:0.2px;-webkit-text-stroke:0.12px #363636">AT-25-7</div><div class="t" style="left:896.20px;top:282.59px;font-size:11px;color:#363636;letter-spacing:0.2px;-webkit-text-stroke:0.12px #363636">tr</div><div class="b" style="left:0px;top:336.8px;width:904px;height:1.0px;background:#ebebeb"></div><div class="t" style="left:12.20px;top:316.09px;font-size:11px;color:#363636;letter-spacing:0.2px;-webkit-text-stroke:0.12px #363636">v2.3</div><div class="t" style="left:111.70px;top:316.09px;font-size:11px;color:#363636;letter-spacing:0.2px;-webkit-text-stroke:0.12px #363636">Albert</div><div class="t" style="left:165.20px;top:316.09px;font-size:11px;color:#363636;letter-spacing:0.2px;-webkit-text-stroke:0.12px #363636">69</div><div class="t" style="left:234.20px;top:316.09px;font-size:11px;color:#363636;letter-spacing:0.2px;-webkit-text-stroke:0.12px #363636">East</div><div class="t" style="left:281.20px;top:316.09px;font-size:11px;color:#363636;letter-spacing:0.2px;-webkit-text-stroke:0.12px #363636">124</div><div class="t" style="left:372.20px;top:316.09px;font-size:11px;color:#363636;letter-spacing:0.2px;-webkit-text-stroke:0.12px #363636">70</div><div class="t" style="left:485.70px;top:316.09px;font-size:11px;color:#363636;letter-spacing:0.2px;-webkit-text-stroke:0.12px #363636">47</div><div class="t" style="left:538.70px;top:316.09px;font-size:11px;color:#363636;letter-spacing:0.2px;-webkit-text-stroke:0.12px #363636">240</div><div class="t" style="left:602.70px;top:316.09px;font-size:11px;color:#363636;letter-spacing:0.2px;-webkit-text-stroke:0.12px #363636">106.135</div><div class="t" style="left:667.20px;top:316.09px;font-size:11px;color:#363636;letter-spacing:0.2px;-webkit-text-stroke:0.12px #363636">3119</div><div class="t" style="left:761.20px;top:316.09px;font-size:11px;color:#363636;letter-spacing:0.2px;-webkit-text-stroke:0.12px #363636">70.048</div><div class="t" style="left:831.70px;top:316.09px;font-size:11px;color:#363636;letter-spacing:0.2px;-webkit-text-stroke:0.12px #363636">AT-25-7</div><div class="t" style="left:896.20px;top:316.09px;font-size:11px;color:#363636;letter-spacing:0.2px;-webkit-text-stroke:0.12px #363636">tr</div><div class="b" style="left:0px;top:370.3px;width:904px;height:1.0px;background:#ebebeb"></div><div class="t" style="left:12.20px;top:349.59px;font-size:11px;color:#363636;letter-spacing:0.2px;-webkit-text-stroke:0.12px #363636">v2.3</div><div class="t" style="left:111.70px;top:349.59px;font-size:11px;color:#363636;letter-spacing:0.2px;-webkit-text-stroke:0.12px #363636">Albert</div><div class="t" style="left:165.20px;top:349.59px;font-size:11px;color:#363636;letter-spacing:0.2px;-webkit-text-stroke:0.12px #363636">95</div><div class="t" style="left:234.20px;top:349.59px;font-size:11px;color:#363636;letter-spacing:0.2px;-webkit-text-stroke:0.12px #363636">East</div><div class="t" style="left:281.20px;top:349.59px;font-size:11px;color:#363636;letter-spacing:0.2px;-webkit-text-stroke:0.12px #363636">132</div><div class="t" style="left:372.20px;top:349.59px;font-size:11px;color:#363636;letter-spacing:0.2px;-webkit-text-stroke:0.12px #363636">54</div><div class="t" style="left:485.70px;top:349.59px;font-size:11px;color:#363636;letter-spacing:0.2px;-webkit-text-stroke:0.12px #363636">41</div><div class="t" style="left:538.70px;top:349.59px;font-size:11px;color:#363636;letter-spacing:0.2px;-webkit-text-stroke:0.12px #363636">90</div><div class="t" style="left:602.70px;top:349.59px;font-size:11px;color:#363636;letter-spacing:0.2px;-webkit-text-stroke:0.12px #363636">100.000</div><div class="t" style="left:667.20px;top:349.59px;font-size:11px;color:#363636;letter-spacing:0.2px;-webkit-text-stroke:0.12px #363636">5400</div><div class="t" style="left:761.20px;top:349.59px;font-size:11px;color:#363636;letter-spacing:0.2px;-webkit-text-stroke:0.12px #363636">81.00</div><div class="t" style="left:831.70px;top:349.59px;font-size:11px;color:#363636;letter-spacing:0.2px;-webkit-text-stroke:0.12px #363636">AT-25-7</div><div class="t" style="left:896.20px;top:349.59px;font-size:11px;color:#363636;letter-spacing:0.2px;-webkit-text-stroke:0.12px #363636">tr</div></div></div><div class="b" style="left:512px;top:646px;width:903.5px;height:1px;background:#e6e6e6"></div><div class="t" style="left:1114.00px;top:667.39px;font-size:11px;color:#444;letter-spacing:-0.12px;-webkit-text-stroke:0.2px #444">Rows per page:</div><div class="t" style="left:1202.50px;top:667.39px;font-size:11px;color:#333">16</div><svg class="i" style="left:1219.70px;top:670.25px" width="7" height="3.5" viewBox="0 0 7 3.5"><path d="M0 0H7L3.5 3.5Z" fill="#666"/></svg><div class="t" style="left:1255.00px;top:667.39px;font-size:11px;color:#333">1&ndash;16 of 3000000</div><svg class="i" style="left:1362.55px;top:665.55px" width="13.5" height="13.5" viewBox="0 0 24 24" fill="none" stroke="#bbb" stroke-width="2.2" stroke-linecap="round" stroke-linejoin="round"><path d="m15 18-6-6 6-6"/></svg><svg class="i" style="left:1392.75px;top:665.55px" width="13.5" height="13.5" viewBox="0 0 24 24" fill="none" stroke="#222" stroke-width="2.4" stroke-linecap="round" stroke-linejoin="round"><path d="m9 18 6-6-6-6"/></svg><div class="b" style="left:1427px;top:0px;width:1px;height:47px;background:#5a5f88"></div><div class="b" style="left:1427px;top:47px;width:1px;height:32px;background:#c8c8c8"></div><div class="b" style="left:1428px;top:0px;width:1px;height:79px;background:#000"></div><div class="b" style="left:1427px;top:79px;width:1px;height:620px;background:#8a8a8a"></div><div class="b" style="left:1428px;top:79px;width:1px;height:106px;background:#8a8a8a"></div><div class="b" style="left:1428px;top:185px;width:1px;height:514px;background:#000"></div>
</body></html>
